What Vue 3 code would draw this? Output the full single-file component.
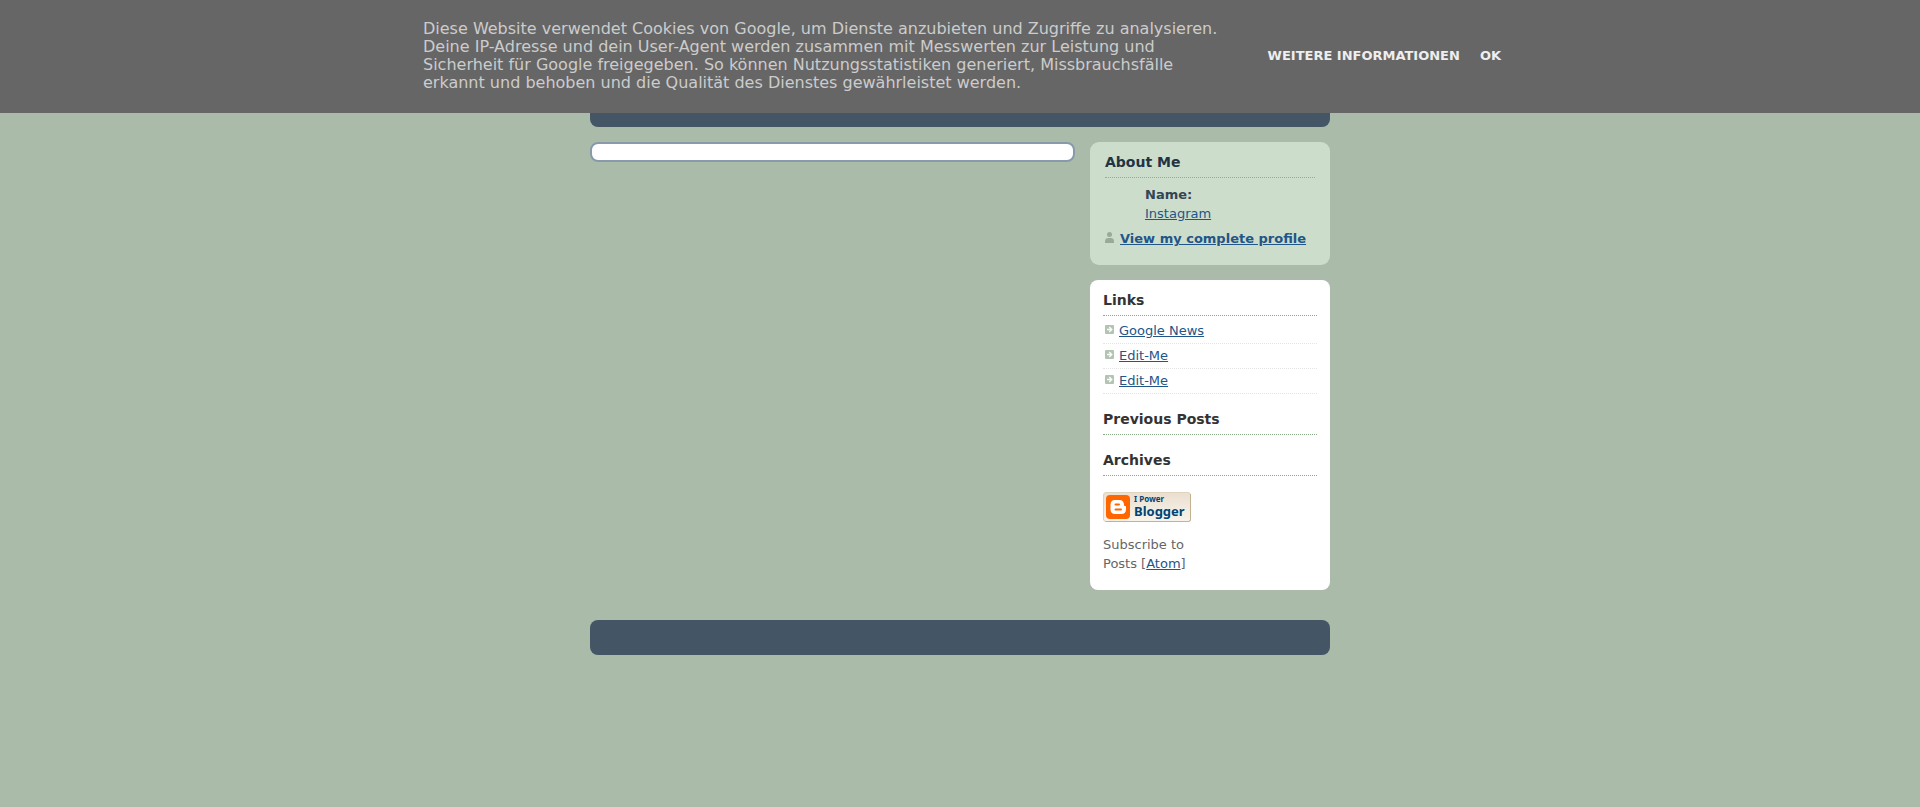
<template>
    <div class="page">
        <div class="cookie-bar" role="region" aria-label="Cookies">
            <div class="cookie-bar__inner">
                <p class="cookie-bar__text">
                    Diese Website verwendet Cookies von Google, um Dienste anzubieten und Zugriffe zu
                    analysieren. Deine IP-Adresse und dein User-Agent werden zusammen mit Messwerten zur
                    Leistung und Sicherheit für Google freigegeben. So können Nutzungsstatistiken
                    generiert, Missbrauchsfälle erkannt und behoben und die Qualität des Dienstes
                    gewährleistet werden.
                </p>
                <div class="cookie-bar__actions">
                    <a class="cookie-bar__action" href="#">WEITERE INFORMATIONEN</a>
                    <button class="cookie-bar__action" type="button">OK</button>
                </div>
            </div>
        </div>

        <div class="wrap">
            <header class="header" />

            <div class="columns">
                <main class="posts" />

                <aside class="sidebar">
                    <section class="profile">
                        <h2 class="title title--profile">About Me</h2>
                        <dl class="profile__data">
                            <dt>Name:</dt>
                            <dd><a href="#">Instagram</a></dd>
                        </dl>
                        <p class="profile__link">
                            <svg class="icon" viewBox="0 0 9 11" width="9" height="11" aria-hidden="true">
                                <circle cx="4.5" cy="2.5" r="2.5" fill="#9aaa99" />
                                <path d="M0 11V9.2C0 7 1.6 6 3 6h3c1.4 0 3 1 3 3.2V11z" fill="#9aaa99" />
                            </svg>
                            <a href="#">View my complete profile</a>
                        </p>
                    </section>

                    <section class="box">
                        <h2 class="title">Links</h2>
                        <ul class="links">
                            <li v-for="(link, i) in links" :key="i">
                                <svg class="icon" viewBox="0 0 9 9" width="9" height="9" aria-hidden="true">
                                    <rect width="9" height="9" rx="1" fill="#b3c4b2" />
                                    <path d="M2 4.5h5M4.3 2l2.5 2.5L4.3 7" fill="none" stroke="#fff" stroke-width="1.3" />
                                </svg>
                                <a href="#">{{ link }}</a>
                            </li>
                        </ul>
                        <h2 class="title">Previous Posts</h2>
                        <h2 class="title">Archives</h2>

                        <a class="badge" href="#" aria-label="I Power Blogger">
                            <svg viewBox="0 0 88 31" width="88" height="31">
                                <defs>
                                    <linearGradient id="badge-bg" x1="0" y1="0" x2="0" y2="1">
                                        <stop offset="0" stop-color="#eadfd0" />
                                        <stop offset="1" stop-color="#f8f4ec" />
                                    </linearGradient>
                                </defs>
                                <rect x="0.5" y="0.5" width="87" height="29" rx="2.5" fill="url(#badge-bg)" stroke="#e0d2bd" />
                                <path d="M87.5 2v25.5q0 2-2 2h-83" fill="none" stroke="#c4b190" />
                                <rect x="3" y="3" width="24" height="24" rx="4" fill="#f60" />
                                <path
                                    fill="#fff"
                                    d="M12 8h4.5c2.7 0 4.5 2 4.5 4.5 0 1 .3 1.5 1 1.5s1 .4 1 1v2.5c0 3-2 4.5-4.5 4.5H12c-3 0-4.5-1.8-4.5-4.5v-5C7.5 9.8 9 8 12 8z"
                                />
                                <path d="M12.5 12.5H16M12.5 17.5H18" stroke="#f60" stroke-width="2" stroke-linecap="round" />
                                <text class="badge__small" x="31" y="10">I Power</text>
                                <text class="badge__big" x="31" y="24">Blogger</text>
                            </svg>
                        </a>

                        <p class="subscribe">Subscribe to<br />Posts [<a href="#">Atom</a>]</p>
                    </section>
                </aside>
            </div>

            <footer class="footer" />
        </div>
    </div>
</template>

<script setup>
const links = ['Google News', 'Edit-Me', 'Edit-Me']
</script>

<style>
body {
    margin: 0;
    background: #aabbaa;
}
</style>

<style scoped>
.page {
    font-family: 'DejaVu Sans', sans-serif;
    font-size: 13px;
    line-height: 19px;
    color: #666;
}

h2,
p,
ul,
dl,
dd {
    margin: 0;
    padding: 0;
}

a {
    color: #258;
}

.cookie-bar {
    position: fixed;
    top: 0;
    left: 0;
    right: 0;
    z-index: 10;
    padding: 20px 16px 21px 20px;
    background: #666;
}

.cookie-bar__inner {
    display: flex;
    align-items: center;
    justify-content: space-between;
    max-width: 1078px;
    margin: 0 auto;
}

.cookie-bar__text {
    max-width: 800px;
    font-size: 16px;
    line-height: 18px;
    color: #ccc;
}

.cookie-bar__actions {
    display: flex;
    flex-shrink: 0;
    gap: 20px;
    padding-bottom: 2px;
}

.cookie-bar__action {
    padding: 0;
    border: 0;
    background: none;
    font: bold 13px/19px 'DejaVu Sans', sans-serif;
    color: #eee;
    text-decoration: none;
    cursor: pointer;
}

.wrap {
    max-width: 740px;
    margin: 0 auto;
    padding-top: 10px;
}

.header {
    min-height: 117px;
    border-radius: 8px;
    background: #456;
}

.columns {
    display: grid;
    grid-template-columns: 1fr 240px;
    align-items: start;
    gap: 15px;
    margin: 15px 0 30px;
}

.posts {
    padding: 8px;
    border: 2px solid #89a;
    border-radius: 8px;
    background: #fff;
}

.sidebar {
    display: flex;
    flex-direction: column;
    gap: 15px;
}

.profile {
    padding: 10px 15px 17px;
    border-radius: 9px;
    background: #cdc;
    color: #345;
}

.box {
    padding: 10px 13px 17px;
    border-radius: 8px;
    background: #fff;
}

.title {
    margin-bottom: 15px;
    padding-bottom: 5px;
    border-bottom: 1px dotted #8a8;
    font-size: 14px;
    line-height: 20px;
    color: #333;
}

.title--profile {
    margin-bottom: 7px;
    border-color: #9a9;
    color: #234;
}

.profile__data {
    margin: 0 0 6px 40px;
}

.profile__data dt {
    font-weight: bold;
}

.profile__link {
    display: flex;
    gap: 6px;
    font-weight: bold;
}

.icon {
    flex-shrink: 0;
    margin-top: 3px;
}

.links {
    margin: -12px 0 15px;
    list-style: none;
}

.links li {
    display: flex;
    gap: 5px;
    padding: 2px 2px 3px;
    border-bottom: 1px dotted #e4e4e4;
}

.links .icon {
    margin-top: 4px;
}

.badge {
    display: block;
    width: 88px;
    height: 31px;
    margin: 16px 0 12px;
}

.badge svg {
    display: block;
}

.badge text {
    font-family: 'Noto Sans', sans-serif;
    font-weight: bold;
    fill: #047;
}

.badge__small {
    font-size: 8px;
}

.badge__big {
    font-size: 13px;
}

.footer {
    min-height: 35px;
    border-radius: 8px;
    background: #456;
}
</style>
